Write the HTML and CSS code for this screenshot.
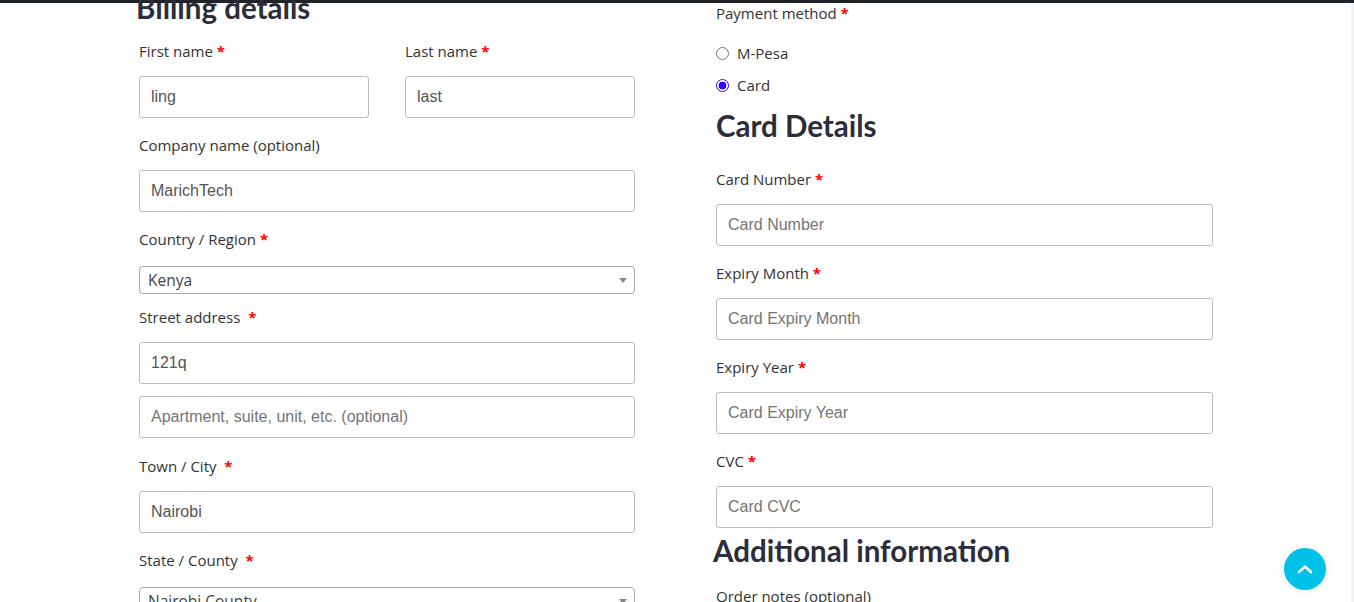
FILE: index.html
```html
<!DOCTYPE html>
<html lang="en">
<head>
<meta charset="utf-8">
<title>Checkout</title>
<link rel="stylesheet" href="styles.css">
</head>
<body>
<div class="topbar"></div>
<div class="page">
  <div class="col col-left">
    <h3 class="heading heading-billing">Billing details</h3>
    <div class="row-half">
      <div class="field">
        <label class="label">First name <abbr class="req">*</abbr></label>
        <input class="input" type="text" value="ling">
      </div>
      <div class="field">
        <label class="label">Last name <abbr class="req">*</abbr></label>
        <input class="input" type="text" value="last">
      </div>
    </div>
    <div class="field">
      <label class="label">Company name (optional)</label>
      <input class="input" type="text" value="MarichTech">
    </div>
    <div class="field field-select">
      <label class="label label-select">Country / Region <abbr class="req">*</abbr></label>
      <div class="select"><span class="select-text">Kenya</span><span class="select-arrow"></span></div>
    </div>
    <div class="field field-street">
      <label class="label">Street address &nbsp;<abbr class="req">*</abbr></label>
      <input class="input" type="text" value="121q">
      <input class="input input-second" type="text" placeholder="Apartment, suite, unit, etc. (optional)">
    </div>
    <div class="field">
      <label class="label">Town / City &nbsp;<abbr class="req">*</abbr></label>
      <input class="input" type="text" value="Nairobi">
    </div>
    <div class="field field-select">
      <label class="label label-select">State / County &nbsp;<abbr class="req">*</abbr></label>
      <div class="select"><span class="select-text">Nairobi County</span><span class="select-arrow"></span></div>
    </div>
  </div>
  <div class="col col-right">
    <div class="payment">
      <label class="label label-payment">Payment method <abbr class="req">*</abbr></label>
      <label class="radio-row"><input class="radio" type="radio" name="pm"><span>M-Pesa</span></label>
      <label class="radio-row"><input class="radio" type="radio" name="pm" checked><span>Card</span></label>
    </div>
    <h3 class="heading heading-card">Card Details</h3>
    <div class="field">
      <label class="label">Card Number <abbr class="req">*</abbr></label>
      <input class="input" type="text" placeholder="Card Number">
    </div>
    <div class="field">
      <label class="label">Expiry Month <abbr class="req">*</abbr></label>
      <input class="input" type="text" placeholder="Card Expiry Month">
    </div>
    <div class="field">
      <label class="label">Expiry Year <abbr class="req">*</abbr></label>
      <input class="input" type="text" placeholder="Card Expiry Year">
    </div>
    <div class="field field-cvc">
      <label class="label">CVC <abbr class="req">*</abbr></label>
      <input class="input" type="text" placeholder="Card CVC">
    </div>
    <h3 class="heading heading-additional">Additional information</h3>
    <label class="label label-notes">Order notes (optional)</label>
  </div>
</div>
<div class="scrollbar"></div>
<a class="to-top" href="#">
  <svg width="16" height="10" viewBox="0 0 16 10"><path d="M2 8 L8 2.5 L14 8" fill="none" stroke="#fff" stroke-width="2.6" stroke-linecap="round" stroke-linejoin="round"/></svg>
</a>
</body>
</html>
```
FILE: styles.css
```css
html, body {
  margin: 0;
  padding: 0;
  background: #fff;
  overflow: hidden;
  height: 602px;
}
body {
  font-family: "Open Sans", "Noto Sans", sans-serif;
  color: #333;
  position: relative;
}
.topbar {
  height: 3px;
  background: #1f2226;
}
.scrollbar {
  position: absolute;
  top: 3px;
  right: 0;
  width: 3px;
  bottom: 0;
  background: #f1f1f1;
}
.page {
  display: grid;
  grid-template-columns: 496px 497px;
  column-gap: 81px;
  padding-left: 139px;
  margin-top: -16px;
}
.col {
  display: flex;
  flex-direction: column;
}
.heading {
  margin: 0;
  font-family: "Lato", "Open Sans", sans-serif;
  font-weight: 700;
  font-size: 29.5px;
  line-height: 36px;
  color: #2b2e3a;
}
.heading-billing {
  margin-left: -3px;
  margin-top: 3px;
  margin-bottom: 14px;
}
.row-half {
  display: grid;
  grid-template-columns: 230px 230px;
  column-gap: 36px;
}
.field {
  display: flex;
  flex-direction: column;
  margin-bottom: 16px;
}
.label {
  display: block;
  font-size: 15px;
  line-height: 22px;
  color: #333;
  margin-bottom: 14px;
}
.req {
  color: #ff0000;
  text-decoration: none;
  font-weight: 700;
}
.input {
  box-sizing: border-box;
  height: 42px;
  width: 100%;
  border: 1px solid #bbb;
  border-radius: 3px;
  padding: 0 11px;
  font-family: "Liberation Sans", Arial, sans-serif;
  font-size: 16px;
  color: #555;
  background: #fff;
  outline: none;
}
.input::placeholder {
  color: #757575;
}
.input-second {
  margin-top: 12px;
}
.field-select {
  margin-bottom: 12px;
}
.label-select {
  margin-bottom: 16px;
}
.select {
  box-sizing: border-box;
  height: 28px;
  border: 1px solid #aaa;
  border-radius: 4px;
  display: flex;
  align-items: center;
  justify-content: space-between;
  padding: 0 7px 0 8px;
}
.select-text {
  font-size: 15.5px;
  color: #444;
}
.select-arrow {
  width: 0;
  height: 0;
  border-left: 4px solid transparent;
  border-right: 4px solid transparent;
  border-top: 5px solid #888;
  margin-top: 1px;
}
.field-street {
  margin-bottom: 17px;
}
.payment {
  display: flex;
  flex-direction: column;
  padding-top: 15px;
}
.label-payment {
  margin-bottom: 18px;
}
.radio-row {
  display: flex;
  align-items: center;
  font-size: 15px;
  line-height: 22px;
  color: #333;
  margin-bottom: 10px;
}
.radio {
  appearance: none;
  -webkit-appearance: none;
  box-sizing: border-box;
  width: 13px;
  height: 13px;
  border: 1px solid #767676;
  border-radius: 50%;
  margin: 0 8px 0 0;
  background: #fff;
}
.radio:checked {
  border: 1px solid #3300ff;
  background: radial-gradient(circle, #3300ff 0 3.6px, #fff 4.2px 100%);
}
.heading-card {
  margin-top: 2px;
  margin-bottom: 24px;
}
.field-cvc {
  margin-bottom: 16px;
}
.heading-additional {
  margin-left: -3px;
  margin-top: -11px;
  margin-bottom: 16px;
}
.label-notes {
  margin-bottom: 0;
}
.to-top {
  position: absolute;
  left: 1284px;
  top: 548px;
  width: 42px;
  height: 42px;
  border-radius: 50%;
  background: #00c2e6;
  box-shadow: 0 0 6px rgba(0,0,0,0.12);
  display: flex;
  align-items: center;
  justify-content: center;
}
```
